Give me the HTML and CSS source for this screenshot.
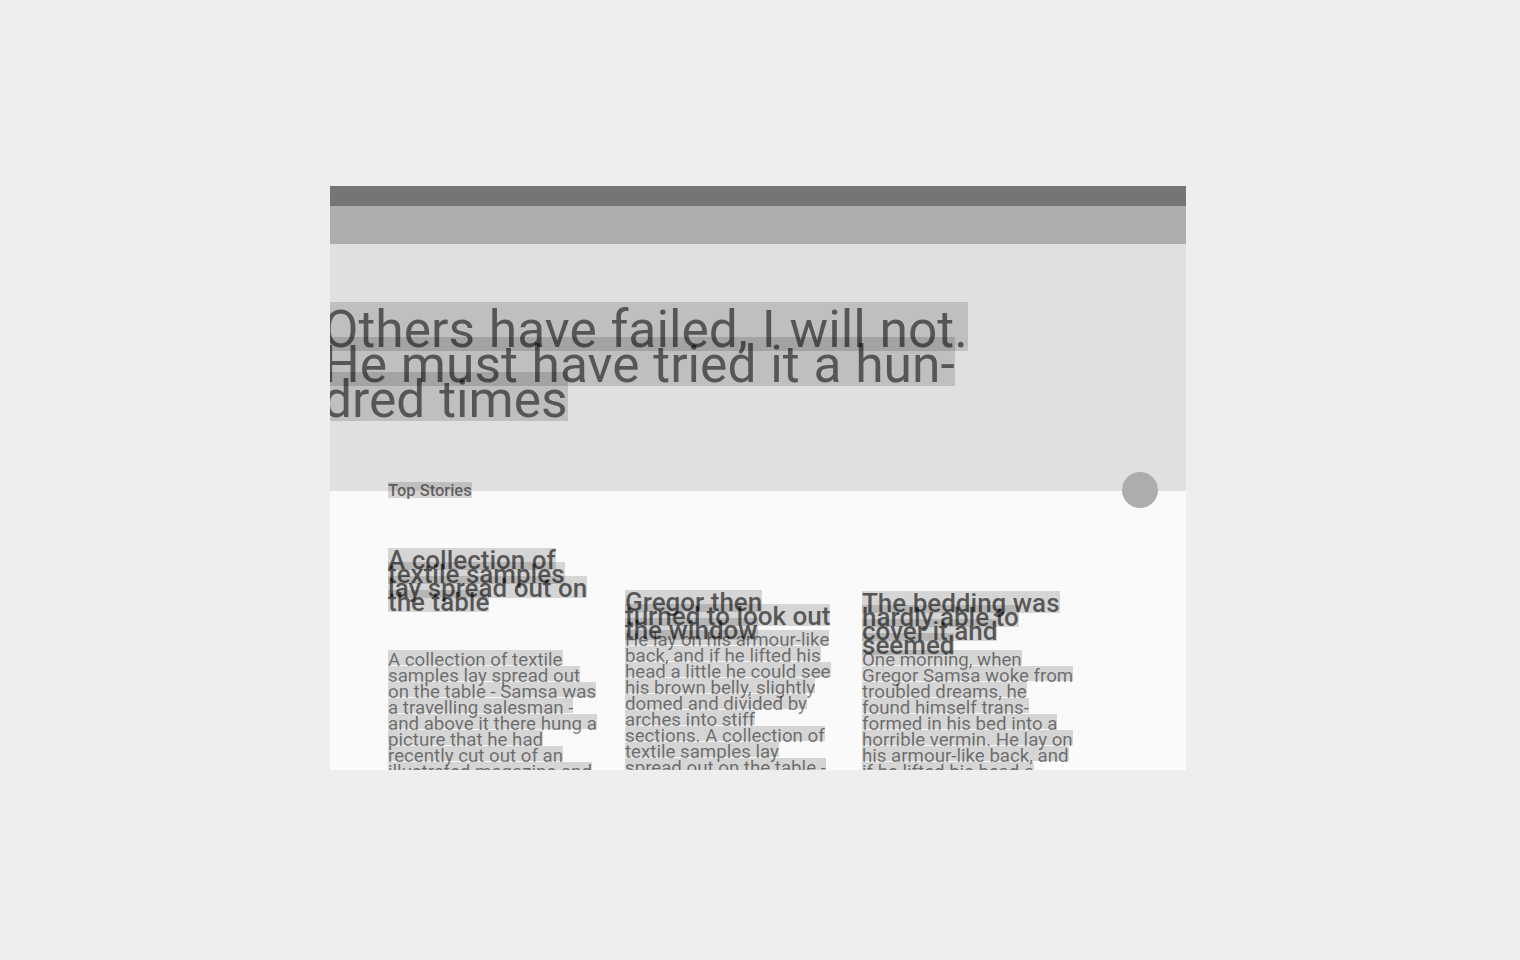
FILE: index.html
```html
<!DOCTYPE html>
<html lang="en">
<head>
<meta charset="utf-8">
<title>Top Stories</title>
<link rel="stylesheet" href="styles.css">
</head>
<body>
<div class="frame">
  <div class="statusbar"></div>
  <div class="toolbar"></div>
  <header class="hero">
    <h1 class="hero-title"><span class="hl">Others have failed, I will not. He must have tried it a hun&shy;dred times</span></h1>
  </header>
  <main class="content">
    <div class="section-head"><span class="hl">Top Stories</span></div>
    <div class="cards">
      <article class="card card-a">
        <h2 class="card-title"><span class="hl">A collection of textile samples lay spread out on the table</span></h2>
        <p class="card-body"><span class="hl">A collection of textile samples lay spread out on the table - Samsa was a travelling salesman - and above it there hung a picture that he had recently cut out of an illustrated magazine and housed in a nice, gilded frame.</span></p>
      </article>
      <article class="card card-b">
        <h2 class="card-title"><span class="hl">Gregor then turned to look out the window</span></h2>
        <p class="card-body"><span class="hl">He lay on his armour-like back, and if he lifted his head a little he could see his brown belly, slightly domed and divided by arches into stiff sections. A collection of textile samples lay spread out on the table - Samsa was a travelling salesman.</span></p>
      </article>
      <article class="card card-c">
        <h2 class="card-title"><span class="hl">The bedding was hardly able to cover it and seemed</span></h2>
        <p class="card-body"><span class="hl">One morning, when Gregor Samsa woke from troubled dreams, he found himself trans&shy;formed in his bed into a horrible vermin. He lay on his armour-like back, and if he lifted his head a<br>little he could see his brown belly.</span></p>
      </article>
    </div>
  </main>
  <div class="fab"></div>
</div>
</body>
</html>
```
FILE: styles.css
```css
html, body {
  margin: 0;
  padding: 0;
  background: #eeeeee;
}
body {
  padding: 186px 0 0 330px;
  font-family: Roboto, "Liberation Sans", sans-serif;
}
.frame {
  position: relative;
  width: 856px;
  height: 584px;
  overflow: hidden;
  display: flex;
  flex-direction: column;
}
.statusbar {
  height: 20px;
  background: #757575;
  flex: none;
}
.toolbar {
  height: 38px;
  background: #adadad;
  flex: none;
}
.hero {
  height: 247px;
  flex: none;
  background: #e0e0e0;
  box-sizing: border-box;
  padding-top: 68px;
}
.hl {
  -webkit-box-decoration-break: clone;
  box-decoration-break: clone;
  background-repeat: no-repeat;
}
.hero-title {
  margin: 0 0 0 -7px;
  width: 660px;
  font-size: 51.5px;
  font-weight: 400;
  line-height: 35px;
  word-spacing: 1px;
  color: rgba(0, 0, 0, 0.55);
}
.hero-title .hl {
  background-image: linear-gradient(to bottom, transparent 5.5%, rgba(0, 0, 0, 0.15) 5.5%, rgba(0, 0, 0, 0.15) 86%, transparent 86%);
}
.content {
  flex: 1;
  background: #fafafa;
  padding: 0 58px;
}
.section-head {
  margin-top: -8px;
  font-size: 16.5px;
  font-weight: 500;
  line-height: 16px;
  color: rgba(0, 0, 0, 0.54);
}
.section-head .hl {
  background-image: linear-gradient(to bottom, transparent 7%, rgba(0, 0, 0, 0.15) 7%, rgba(0, 0, 0, 0.15) 90%, transparent 90%);
}
.cards {
  margin-top: 54px;
  display: grid;
  grid-template-columns: repeat(3, 215px);
  column-gap: 22px;
  align-items: start;
}
.card-title {
  margin: 0;
  font-size: 26px;
  font-weight: 500;
  line-height: 14px;
  color: rgba(0, 0, 0, 0.6);
}
.card-title .hl {
  background-image: linear-gradient(to bottom, transparent 11%, rgba(0, 0, 0, 0.15) 11%, rgba(0, 0, 0, 0.15) 83%, transparent 83%);
}
.card-body {
  margin: 0;
  font-size: 18.7px;
  line-height: 16px;
  color: rgba(0, 0, 0, 0.5);
}
.card-body .hl {
  background-image: linear-gradient(to bottom, transparent 5%, rgba(0, 0, 0, 0.15) 5%, rgba(0, 0, 0, 0.15) 74%, transparent 74%);
}
.card-a .card-title { margin-bottom: 43px; }
.card-b { padding-top: 42px; }
.card-b .card-title { margin-bottom: -5px; }
.card-b .card-body { max-width: 209px; }
.card-c { padding-top: 43px; }
.card-c .card-title { margin-bottom: 0; }
.fab {
  position: absolute;
  left: 792px;
  top: 286px;
  width: 36px;
  height: 36px;
  border-radius: 50%;
  background: #adadad;
}
```
